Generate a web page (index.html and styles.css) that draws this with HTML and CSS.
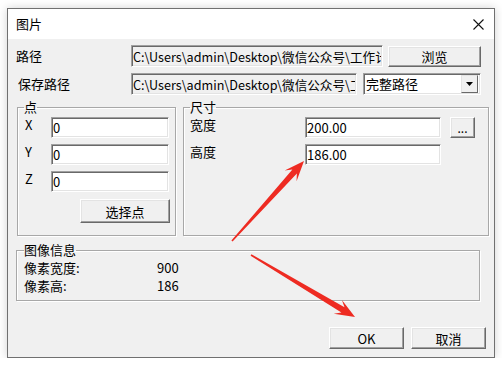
FILE: index.html
```html
<!DOCTYPE html>
<html lang="zh-CN">
<head>
<meta charset="UTF-8">
<title>图片</title>
<link rel="stylesheet" href="styles.css">
</head>
<body>

<div class="window">
  <div class="titlebar">
    <span class="title">图片</span>
    <svg class="close" width="11" height="11" viewBox="0 0 11 11"><path d="M0.5 0.5L10.5 10.5M10.5 0.5L0.5 10.5" stroke="#111" stroke-width="1.1"/></svg>
  </div>

  <div class="content">
    <div class="row">
      <span class="lbl">路径</span>
      <input class="edit ro path1" readonly value="C:\Users\admin\Desktop\微信公众号\工作计划\图片.png">
      <button class="btn browse">浏览</button>
    </div>
    <div class="row row2">
      <span class="lbl lbl-save">保存路径</span>
      <input class="edit ro path2" readonly value="C:\Users\admin\Desktop\微信公众号\工作计划\图片.png">
      <div class="combo">
        <span class="combo-text">完整路径</span>
        <span class="drop"><svg width="7" height="4" viewBox="0 0 7 4"><path d="M0 0H7L3.5 4Z" fill="#000"/></svg></span>
      </div>
    </div>

    <div class="groups">
      <fieldset class="grp pt">
        <legend>点</legend>
        <div class="xyz">
          <span class="axis">X</span><input class="edit" value="0">
          <span class="axis">Y</span><input class="edit" value="0">
          <span class="axis">Z</span><input class="edit" value="0">
        </div>
        <button class="btn pick">选择点</button>
      </fieldset>

      <fieldset class="grp size">
        <legend>尺寸</legend>
        <div class="size-grid">
          <span class="axis">宽度</span><input class="edit" value="200.00"><button class="btn dots">...</button>
          <span class="axis">高度</span><input class="edit" value="186.00">
        </div>
      </fieldset>
    </div>

    <fieldset class="grp info">
      <legend>图像信息</legend>
      <div class="info-grid">
        <span>像素宽度:</span><span>900</span>
        <span>像素高:</span><span>186</span>
      </div>
    </fieldset>

    <div class="actions">
      <button class="btn act">OK</button>
      <button class="btn act">取消</button>
    </div>
  </div>
</div>

<!-- annotation arrows drawn over the dialog -->
<svg class="marks" width="502" height="365" viewBox="0 0 502 365">
  <polygon fill="#ee2b22" points="304,161 296.56,181.21 296.86,173.41 232.59,241.54 231.41,240.46 292.40,169.39 284.68,170.51"/>
  <polygon fill="#ee2b22" points="355,317 333.72,313.63 341.43,312.41 250.59,255.69 251.41,254.31 344.51,307.25 341.92,299.89"/>
</svg>

</body>
</html>
```

FILE: styles.css
```css
body{margin:0;background:#fff;font-family:"Noto Sans CJK SC","Noto Sans",sans-serif;font-size:13px;color:#000;position:relative;}
.window{margin:8px 0 0 7px;width:488px;height:350px;box-sizing:border-box;border:1px solid #707070;background:#f0f0f0;box-shadow:0 0 9px rgba(0,0,0,.18);display:flex;flex-direction:column;}
.titlebar{height:30px;flex:none;background:#fff;display:flex;align-items:center;padding:0 10px 0 8px;}
.title{line-height:16px;}
.close{margin-left:auto;}
.content{padding:6px 8px 0 8px;}

/* rows */
.row{display:flex;align-items:center;height:22px;}
.row2{margin-top:6px;}
.lbl{width:115px;flex:none;line-height:16px;}
.lbl-save{padding-left:2px;width:113px;}

/* classic 3d edges */
.edit{box-sizing:border-box;height:21px;margin:0;padding:0 1px;font:inherit;font-size:13px;color:#000;background:#fff;border:1px solid;border-color:#a0a0a0 #fff #fff #a0a0a0;box-shadow:inset 1px 1px 0 #696969,inset -1px -1px 0 #e3e3e3;outline:none;}
.edit.ro{background:#f0f0f0;height:22px;font-size:12.6px;}
.path1{width:252px;}
.path2{width:226px;}
.btn{box-sizing:border-box;margin:0;padding:0;font:inherit;font-size:13px;color:#000;background:#f0f0f0;border:1px solid;border-color:#fff #696969 #696969 #fff;box-shadow:inset -1px -1px 0 #a0a0a0,inset 1px 1px 0 #e3e3e3;}
.browse{width:93px;height:21px;margin-left:5px;}

.combo{box-sizing:border-box;width:118px;height:22px;margin-left:6px;display:flex;align-items:center;background:#fff;border:1px solid;border-color:#a0a0a0 #fff #fff #a0a0a0;box-shadow:inset 1px 1px 0 #696969,inset -1px -1px 0 #e3e3e3;padding:2px;}
.combo-text{flex:1;line-height:16px;}
.drop{box-sizing:border-box;width:17px;height:18px;display:flex;align-items:center;justify-content:center;background:#f0f0f0;border:1px solid;border-color:#e3e3e3 #696969 #696969 #e3e3e3;}

/* group boxes */
.grp{margin:0;min-width:0;box-sizing:border-box;border:1px solid #a8a8a8;box-shadow:1px 1px 0 #fff,inset 1px 1px 0 #fff;}
.grp legend{padding:0;line-height:16px;}
.groups{display:flex;gap:7px;margin-top:4px;}
.pt{width:159px;height:137px;margin-left:1px;flex:none;padding:2px 6px 0 6px;}
.size{width:306px;height:137px;flex:none;padding:2px 6px 0 6px;}

.xyz{display:grid;grid-template-columns:26px 118px;grid-auto-rows:21px;row-gap:6px;margin-left:1px;}
.axis{line-height:16px;}
.pick{width:90px;height:24px;margin:7px 0 0 56px;}

.size-grid{display:grid;grid-template-columns:115px 136px 25px;grid-auto-rows:21px;row-gap:6px;}
.size-grid .axis{line-height:15px;}
.size-grid .edit{height:21px;}
.dots{width:25px;height:21px;margin-left:9px;font-size:12px;line-height:10px;}

.info{width:464px;height:59px;margin-top:6px;padding:1px 7px 0 7px;}
.info-grid{display:grid;grid-template-columns:133px auto;grid-auto-rows:18px;line-height:18px;}

.actions{display:flex;justify-content:flex-end;gap:7px;margin-top:26px;}
.act{width:75px;height:22px;}

.marks{position:absolute;left:0;top:0;pointer-events:none;}
```
